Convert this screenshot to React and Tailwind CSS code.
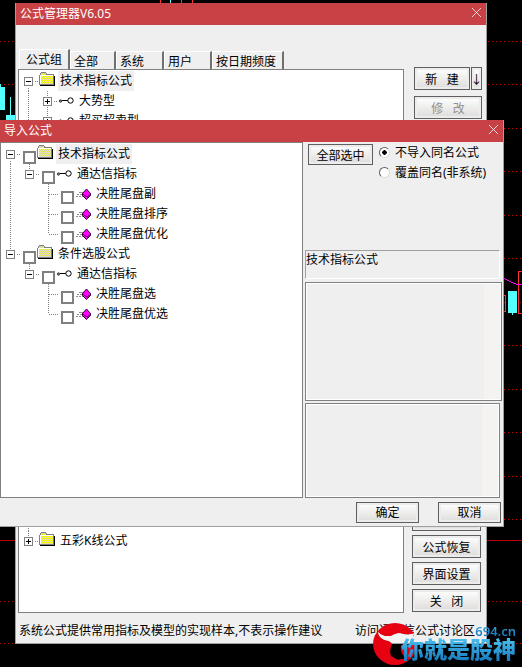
import React from 'react';

const BUTTON =
  'flex items-center justify-center border border-[#5f5f5f] bg-linear-to-b from-white to-[#dddcda] pt-0.5 text-xs leading-none whitespace-pre shadow-[inset_0_0_0_2px_#ececec]';

const backTree = [
  { guides: ['first'], sign: 'minus', icon: 'folder', label: '技术指标公式', selected: true },
  { guides: ['line', 'tee'], sign: 'plus', icon: 'key', label: '大势型' },
  { guides: ['line', 'tee'], sign: 'plus', icon: 'key', label: '超买超卖型' },
];

const importTree = [
  { guides: ['first'], sign: 'minus', icon: 'folder', label: '技术指标公式', selected: true },
  { guides: ['line', 'end'], sign: 'minus', icon: 'key', label: '通达信指标' },
  { guides: ['line', 'blank', 'tee'], icon: 'formula', label: '决胜尾盘副' },
  { guides: ['line', 'blank', 'tee'], icon: 'formula', label: '决胜尾盘排序' },
  { guides: ['line', 'blank', 'end'], icon: 'formula', label: '决胜尾盘优化' },
  { guides: ['end'], sign: 'minus', icon: 'folder', label: '条件选股公式' },
  { guides: ['blank', 'end'], sign: 'minus', icon: 'key', label: '通达信指标' },
  { guides: ['blank', 'blank', 'tee'], icon: 'formula', label: '决胜尾盘选' },
  { guides: ['blank', 'blank', 'end'], icon: 'formula', label: '决胜尾盘优选' },
];

const gridLines = [41, 84, 128, 171, 215, 258, 302, 345, 389, 432, 476, 519, 601, 643];

// checkerboard of single pixels inside the folder
const dither = [5, 6, 7, 8, 9, 10, 11, 12]
  .flatMap((y) => [0, 1, 2, 3, 4, 5].map((i) => `M${2 + i * 2 + (y % 2)} ${y}h1v1h-1z`))
  .join('');

const Chart = () => (
  <svg className="absolute inset-0 h-full w-full" shapeRendering="crispEdges" aria-hidden="true">
    {gridLines.map((y) => (
      <line key={y} x1="0" x2="100%" y1={y + 0.5} y2={y + 0.5} stroke="#c00000" strokeDasharray="1 3" />
    ))}
    <line x1="0" x2="100%" y1="540.5" y2="540.5" stroke="#c00000" />
    <path d="M160.5 0v3M192.5 0v3" stroke="#ff3232" />
    <path d="M170.5 0v3" stroke="#54ffff" />
    <path d="M181.5 0v3" stroke="#ff3232" />
    <path d="M0 84h1v3h4v23H0zM10 97h1v18h4v6H6v-6h4z" fill="#54ffff" />
    <path d="M508 291h9v22h-4v2h-1v-2h-4z" fill="#54ffff" />
    <path d="M500 295.5h5.500v16H500M525 271.500h-6.500v41.500h7" fill="none" stroke="#ff3232" />
    <path d="M503 278l4 2 5 2.500 4 1.500h8" fill="none" stroke="#ff00ff" />
  </svg>
);

const Guide = ({ kind, sign }) => {
  const path = {
    line: 'M9.500 0v20',
    tee: 'M9.500 0v20M10 10.500h9',
    end: 'M9.500 0v10M10 10.500h9',
    first: 'M9.500 11v9M10 10.500h9',
    blank: '',
  }[kind];
  return (
    <svg className="block h-5 w-[19px]" viewBox="0 0 19 20" shapeRendering="crispEdges" aria-hidden="true">
      <path d={path} fill="none" stroke="#808080" strokeDasharray="1 1" />
      {sign && <rect x="4.500" y="5.500" width="10" height="10" fill="#fff" />}
      {sign && <rect x="5.500" y="6.500" width="8" height="8" fill="#fff" stroke="#808080" />}
      {sign && <path d="M7 10.500h5" stroke="#000" />}
      {sign === 'plus' && <path d="M9.500 8v5" stroke="#000" />}
    </svg>
  );
};

const NodeIcon = ({ name, pale }) => (
  <svg className="h-5 w-4 shrink-0" viewBox="0 0 16 20" shapeRendering="crispEdges" aria-hidden="true">
    {name === 'folder' && (
      <>
        <path d="M1 14h14V5" fill="none" stroke="#000" strokeWidth="2" />
        <path d="M0.500 13.500v-9l1-1V2.500l1-1h4l1 1v1h6.500v10z" fill={pale ? '#d0d0c8' : '#d8d890'} stroke="#808080" />
        <path d={dither} fill={pale ? '#f0f060' : '#ffff00'} />
        <path d="M2 3h5v1H2z" fill={pale ? '#e4e490' : '#f0f020'} />
        <path d="M1.500 13v-8.500h12" fill="none" stroke="#fff" />
      </>
    )}
    {name === 'key' && (
      <g fill="none" stroke="#000" shapeRendering="auto">
        <circle cx="2.500" cy="10" r="1.200" fill="#808080" stroke="#404040" />
        <path d="M4 9.500h6" />
        <circle cx="12.500" cy="9.500" r="2.700" fill="#fff" />
      </g>
    )}
    {name === 'formula' && (
      <>
        <path d="M4 8.500h4M2 10.500h2M5 10.500h3M1 12.500h2M4 12.500h2M7 12.500h2" stroke="#909090" />
        <path d="M11.500 5l4 4.500v2l-4 4-4-4v-2z" fill="#ff00ff" stroke="#200020" shapeRendering="auto" />
        <path d="M8 10.500l4 2.500 3.500-2.500M12 13v2" fill="none" stroke="#900090" />
      </>
    )}
  </svg>
);

const TreeRow = ({ node, checkable }) => (
  <li className="flex h-5 items-center">
    {node.guides.map((kind, i) => {
      const last = i === node.guides.length - 1;
      return last && node.sign ? (
        <button key={i} type="button" aria-label={node.label}>
          <Guide kind={kind} sign={node.sign} />
        </button>
      ) : (
        <Guide key={i} kind={kind} />
      );
    })}
    <label className="flex h-5 items-center">
      {checkable && (
        <input
          type="checkbox"
          className="mr-px ml-[3px] size-[13px] shrink-0 appearance-none self-end border-2 border-[#808080] bg-white checked:bg-[#808080]"
        />
      )}
      <span className={checkable ? '' : 'ml-px'}>
        <NodeIcon name={node.icon} pale={checkable} />
      </span>
      <span className={`ml-[3px] h-5 px-0.5 leading-5 whitespace-nowrap ${node.selected ? 'bg-[#efefef]' : ''}`}>
        {node.label}
      </span>
    </label>
  </li>
);

const TitleBar = ({ title }) => (
  <header className="flex h-[22px] shrink-0 items-center justify-between bg-[#c84145] pr-[5px] pl-1 text-white">
    <h2 className="text-xs leading-5">{title}</h2>
    <button type="button" aria-label="关闭窗口">
      <svg className="mb-1 size-[9px]" viewBox="0 0 9 9" aria-hidden="true">
        <path d="M0 0l9 9M9 0L0 9" stroke="#fff" strokeWidth="0.800" />
      </svg>
    </button>
  </header>
);

const tabs = [
  { label: '全部', width: 'w-[46px]' },
  { label: '系统', width: 'w-[48px]' },
  { label: '用户', width: 'w-[48px]' },
  { label: '按日期频度', width: 'w-[72px]' },
];

const ManagerWindow = () => (
  <section className="absolute top-[3px] right-[35px] bottom-[23px] left-[15px] flex flex-col border-r border-b border-l border-[#a0a0a0] bg-[#efefef]">
    <TitleBar title="公式管理器V6.05" />
    <nav className="mt-6 ml-0.5 flex h-5 shrink-0 items-end pl-px">
      <button type="button" className="h-5 w-[51px] border-t border-r-2 border-l border-t-white border-r-[#707070] border-l-white text-xs leading-5">
        公式组
      </button>
      {tabs.map((tab) => (
        <button
          key={tab.label}
          type="button"
          className={`h-[18px] border-t border-r-2 border-l border-t-white border-r-[#707070] border-l-white pl-[3px] text-left text-xs leading-5 whitespace-nowrap ${tab.width}`}
        >
          {tab.label}
        </button>
      ))}
    </nav>
    <div className="flex min-h-0 flex-1 pr-1 pl-0.5">
      <ul className="flex flex-1 flex-col border border-[#808080] bg-white pt-px pb-[61px]">
        {backTree.map((node) => (
          <TreeRow key={node.label} node={node} />
        ))}
        <li className="ml-[9px] flex-1 border-l border-dotted border-[#808080]" aria-hidden="true" />
        <TreeRow node={{ guides: ['end'], sign: 'plus', icon: 'folder', label: '五彩K线公式' }} />
      </ul>
      <div className="ml-2 flex w-[70px] flex-col">
        <div className="-mt-0.5 mb-1.5 ml-0.5 flex gap-px">
          <button type="button" className={`${BUTTON} h-[23px] flex-1`}>新   建</button>
          <button type="button" className={`${BUTTON} h-[23px] w-[11px]`}>↓</button>
        </div>
        <button type="button" className={`${BUTTON} ml-0.5 h-[23px] text-[#909090]`}>修   改</button>
        <div className="mt-auto mr-px flex flex-col gap-1 pb-px">
          <button type="button" className={`${BUTTON} h-[23px]`} aria-label="公式备份" />
          <button type="button" className={`${BUTTON} h-[23px]`}>公式恢复</button>
          <button type="button" className={`${BUTTON} h-[23px]`}>界面设置</button>
          <button type="button" className={`${BUTTON} h-[23px]`}>关   闭</button>
        </div>
      </div>
    </div>
    <footer className="flex h-[30px] shrink-0 items-center justify-between pt-1.5 pr-[11px] pl-[3px] whitespace-nowrap">
      <span>系统公式提供常用指标及模型的实现样本,不表示操作建议</span>
      <a href="#forum">访问通达信公式讨论区</a>
    </footer>
  </section>
);

const Radio = ({ label, checked }) => (
  <label className="flex h-5 items-center gap-[5px] whitespace-nowrap">
    <input
      type="radio"
      name="conflict"
      defaultChecked={checked}
      className="size-[11px] appearance-none rounded-full border border-t-[#606060] border-r-[#dcdcdc] border-b-[#dcdcdc] border-l-[#606060] bg-white checked:bg-[radial-gradient(circle,#000_2px,#fff_2.5px)]"
    />
    <span className="pt-0.5">{label}</span>
  </label>
);

const ImportDialog = () => (
  <section
    role="dialog"
    aria-label="导入公式"
    className="absolute top-[120px] right-[18px] bottom-[140px] left-0 flex flex-col border-r border-b border-[#a0a0a0] bg-[#efefef]"
  >
    <TitleBar title="导入公式" />
    <div className="flex min-h-0 flex-1">
      <ul className="flex-1 border border-[#808080] bg-white pt-px">
        {importTree.map((node, i) => (
          <TreeRow key={i} node={node} checkable />
        ))}
      </ul>
      <div className="flex w-[200px] flex-col pl-0.5">
        <div className="flex h-[108px] items-start gap-1.5 pl-[3px]">
          <button type="button" className={`${BUTTON} mt-0.5 h-[21px] w-[65px]`}>全部选中</button>
          <div>
            <Radio label="不导入同名公式" checked />
            <Radio label="覆盖同名(非系统)" />
          </div>
        </div>
        <p className="mr-[3px] h-[29px] border border-t-[#a0a0a0] border-r-white border-b-white border-l-[#a0a0a0] leading-[18px]">
          技术指标公式
        </p>
        <div className="mt-[3px] mr-px flex flex-[120] justify-end border border-[#808080]">
          <div className="flex flex-1 justify-end border border-white">
            <div className="w-4 bg-[#f4f3f1]" />
          </div>
        </div>
        <div className="mt-0.5 mr-[3px] flex flex-[95] justify-end border border-[#808080]">
          <div className="flex flex-1 justify-end border border-white">
            <div className="w-4 bg-[#f4f3f1]" />
          </div>
        </div>
      </div>
    </div>
    <footer className="flex h-7 shrink-0 items-center justify-end gap-[19px] pr-0.5">
      <button type="button" className={`${BUTTON} h-[21px] w-[63px]`}>确定</button>
      <button type="button" className={`${BUTTON} h-[21px] w-[63px]`}>取消</button>
    </footer>
  </section>
);

const Watermark = () => (
  <div className="absolute right-1.5 bottom-0.5 flex items-end">
    <svg className="-mr-4 h-[42px] w-11" viewBox="0 0 44 42" aria-hidden="true">
      <mask id="bull">
        <rect width="44" height="42" fill="#fff" />
        <path
          d="M5 9Q9 14 18 13Q24 9 30 11Q38 13 44 8V22H28Q27 28 30 32L35 37Q28 35 25 37L18 33Q16 27 19 21Q18 18 12 17Q6 15 5 9z"
          fill="#000"
        />
      </mask>
      <ellipse cx="22" cy="21" rx="22" ry="21" fill="#e60012" mask="url(#bull)" />
      <path d="M5 9Q9 14 18 13Q24 9 30 11Q38 13 42 10Q38 18 28 17L26 20H19Q18 18 12 17Q6 15 5 9z" fill="#f4f4f4" />
    </svg>
    <div className="relative flex flex-col items-end">
      <span className="bg-linear-to-b from-[#36a9e1] to-[#1470b8] bg-clip-text text-[13px] leading-3 font-semibold text-transparent">694.cn</span>
      <span className="bg-linear-to-b from-[#4cc3f0] to-[#0b6fb8] bg-clip-text pb-1 text-[23px] leading-6 font-black text-transparent">
        你就是股神
      </span>
    </div>
  </div>
);

export default function App() {
  return (
    <main className="relative min-h-screen overflow-hidden bg-black font-['Noto_Sans','Noto_Sans_CJK_SC',sans-serif] text-xs text-black">
      <Chart />
      <ManagerWindow />
      <ImportDialog />
      <Watermark />
    </main>
  );
}
